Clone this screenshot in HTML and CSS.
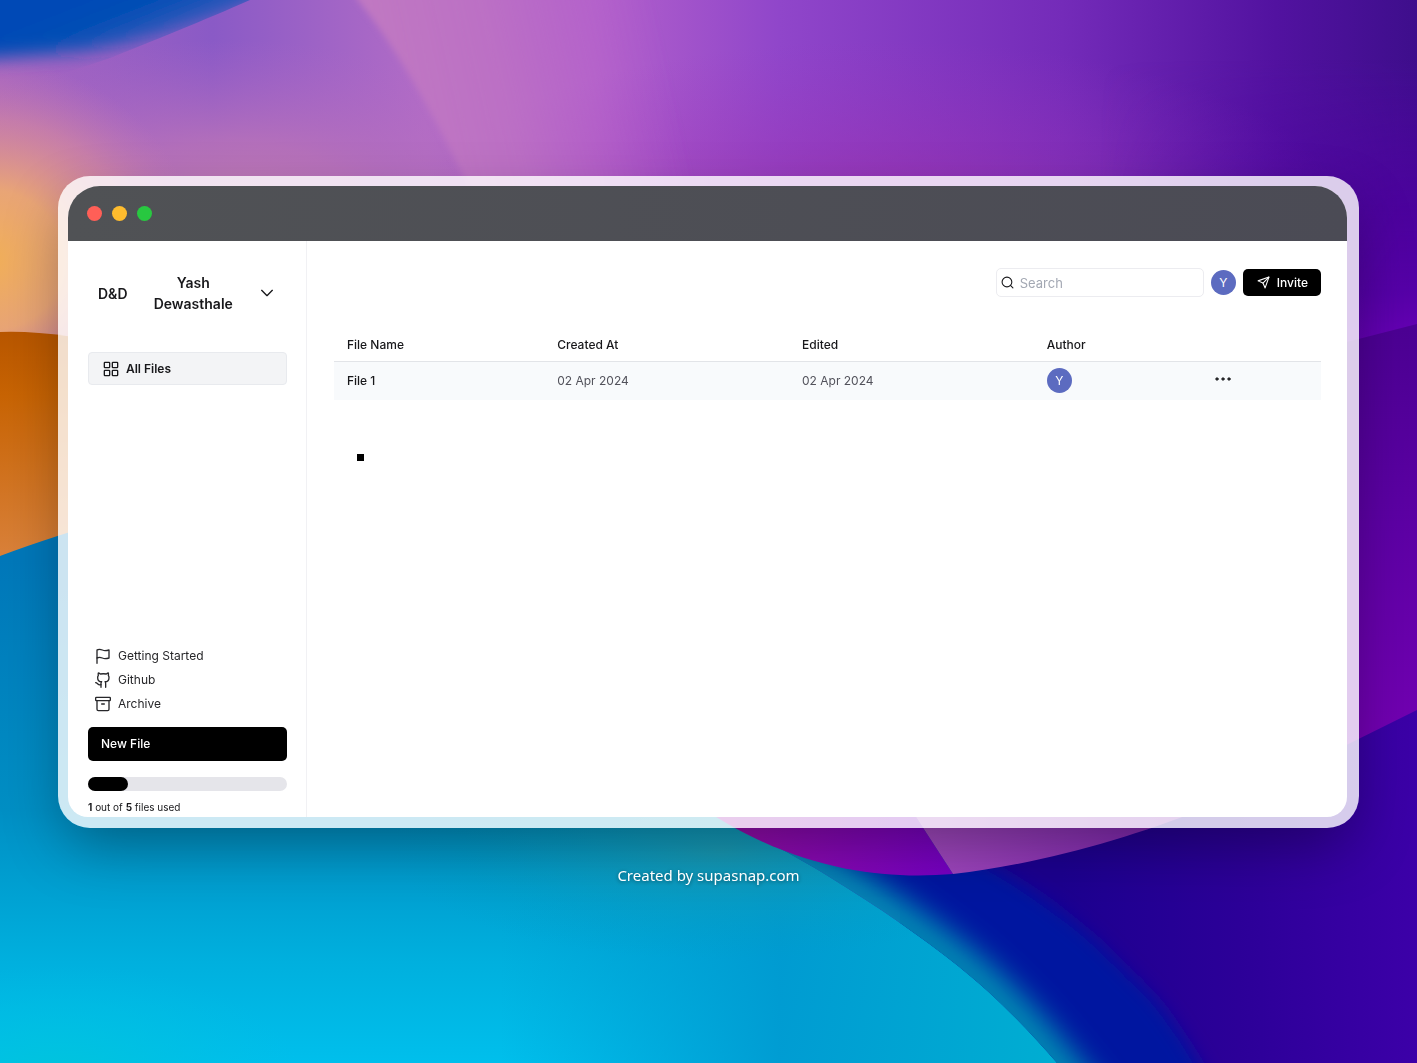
FILE: index.html
```html
<!DOCTYPE html>
<html lang="en">
<head>
<meta charset="utf-8">
<meta name="viewport" content="width=device-width, initial-scale=1">
<title>All Files</title>
<link rel="stylesheet" href="styles.css">
</head>
<body>
<svg class="wallpaper" viewBox="0 0 1417 1063" preserveAspectRatio="none" aria-hidden="true">
  <defs>
    <linearGradient id="sky" x1="0" y1="0" x2="1" y2="0">
      <stop offset="0" stop-color="#a866c0"/>
      <stop offset=".15" stop-color="#8a5ac6"/>
      <stop offset=".3" stop-color="#b26cc6"/>
      <stop offset=".42" stop-color="#b260cb"/>
      <stop offset=".55" stop-color="#9046ca"/>
      <stop offset=".75" stop-color="#742bb9"/>
      <stop offset=".9" stop-color="#5212a0"/>
      <stop offset="1" stop-color="#3e0e8c"/>
    </linearGradient>
    <linearGradient id="ray" gradientUnits="userSpaceOnUse" x1="370" y1="0" x2="640" y2="-60">
      <stop offset="0" stop-color="#c078c2"/>
      <stop offset=".4" stop-color="#be72c4" stop-opacity=".8"/>
      <stop offset="1" stop-color="#b862cc" stop-opacity="0"/>
    </linearGradient>
    <linearGradient id="blue" gradientUnits="userSpaceOnUse" x1="60" y1="0" x2="88" y2="72">
      <stop offset="0" stop-color="#0048b6"/>
      <stop offset=".5" stop-color="#064fb5"/>
      <stop offset="1" stop-color="#3c5cbc"/>
    </linearGradient>
    <linearGradient id="amber" gradientUnits="userSpaceOnUse" x1="0" y1="330" x2="0" y2="550">
      <stop offset="0" stop-color="#b85600"/>
      <stop offset=".3" stop-color="#c86404"/>
      <stop offset="1" stop-color="#d98038"/>
    </linearGradient>
    <linearGradient id="violet" gradientUnits="userSpaceOnUse" x1="0" y1="330" x2="0" y2="740">
      <stop offset="0" stop-color="#4c0094"/>
      <stop offset=".5" stop-color="#5e00a6"/>
      <stop offset="1" stop-color="#7200b2"/>
    </linearGradient>
    <linearGradient id="sea" gradientUnits="userSpaceOnUse" x1="0" y1="560" x2="0" y2="1063">
      <stop offset="0" stop-color="#0078ba"/>
      <stop offset=".5" stop-color="#008fc4"/>
      <stop offset=".8" stop-color="#00b0de"/>
      <stop offset="1" stop-color="#00bfec"/>
    </linearGradient>
    <linearGradient id="seaSide" gradientUnits="userSpaceOnUse" x1="500" y1="0" x2="1060" y2="0">
      <stop offset="0" stop-color="#009cd2" stop-opacity="0"/>
      <stop offset=".5" stop-color="#0099d0" stop-opacity=".9"/>
      <stop offset="1" stop-color="#00aed2"/>
    </linearGradient>
    <linearGradient id="indigo" gradientUnits="userSpaceOnUse" x1="1060" y1="0" x2="1417" y2="0">
      <stop offset="0" stop-color="#1c0090"/>
      <stop offset=".5" stop-color="#2c0098"/>
      <stop offset="1" stop-color="#3c00a8"/>
    </linearGradient>
    <linearGradient id="petal" gradientUnits="userSpaceOnUse" x1="720" y1="0" x2="960" y2="0">
      <stop offset="0" stop-color="#960ea8"/>
      <stop offset="1" stop-color="#7400c4"/>
    </linearGradient>
    <linearGradient id="petalLight" gradientUnits="userSpaceOnUse" x1="930" y1="0" x2="1180" y2="0">
      <stop offset="0" stop-color="#a048be"/>
      <stop offset="1" stop-color="#7e24b0"/>
    </linearGradient>
    <radialGradient id="peach" gradientUnits="userSpaceOnUse" cx="0" cy="0" r="1" gradientTransform="translate(-10 260) scale(210 200)">
      <stop offset="0" stop-color="#f2b058"/>
      <stop offset=".35" stop-color="#eca872" stop-opacity=".95"/>
      <stop offset=".7" stop-color="#dc8e98" stop-opacity=".55"/>
      <stop offset="1" stop-color="#c87cb0" stop-opacity="0"/>
    </radialGradient>
    <radialGradient id="rose" gradientUnits="userSpaceOnUse" cx="0" cy="0" r="1" gradientTransform="translate(230 210) scale(330 170)">
      <stop offset="0" stop-color="#c27cb2"/>
      <stop offset=".4" stop-color="#bc74b8" stop-opacity=".8"/>
      <stop offset="1" stop-color="#b068c4" stop-opacity="0"/>
    </radialGradient>
    <radialGradient id="magenta" gradientUnits="userSpaceOnUse" cx="0" cy="0" r="1" gradientTransform="translate(880 210) scale(460 170)">
      <stop offset="0" stop-color="#a030ac" stop-opacity=".7"/>
      <stop offset="1" stop-color="#9a38c0" stop-opacity="0"/>
    </radialGradient>
    <radialGradient id="mint" gradientUnits="userSpaceOnUse" cx="0" cy="0" r="1" gradientTransform="translate(60 1075) scale(240 110)">
      <stop offset="0" stop-color="#00c4dc"/>
      <stop offset="1" stop-color="#00c0e4" stop-opacity="0"/>
    </radialGradient>
    <radialGradient id="teal" gradientUnits="userSpaceOnUse" cx="0" cy="0" r="1" gradientTransform="translate(720 850) scale(330 110)">
      <stop offset="0" stop-color="#1e9aae" stop-opacity=".8"/>
      <stop offset="1" stop-color="#009cc0" stop-opacity="0"/>
    </radialGradient>
    <linearGradient id="edge" gradientUnits="userSpaceOnUse" x1="0" y1="60" x2="0" y2="350">
      <stop offset="0" stop-color="#5400a8" stop-opacity="0"/>
      <stop offset=".5" stop-color="#4e00a0" stop-opacity=".8"/>
      <stop offset=".8" stop-color="#5600a8"/>
      <stop offset="1" stop-color="#6a00b8"/>
    </linearGradient>
    <linearGradient id="edgeFade" gradientUnits="userSpaceOnUse" x1="1100" y1="0" x2="1400" y2="0">
      <stop offset="0" stop-color="#000"/>
      <stop offset="1" stop-color="#fff"/>
    </linearGradient>
    <mask id="edgeMask"><rect x="1100" width="317" height="380" fill="url(#edgeFade)"/></mask>
    <filter id="soft" x="-30%" y="-30%" width="160%" height="160%"><feGaussianBlur stdDeviation="14"/></filter>
    <filter id="softer" x="-30%" y="-30%" width="160%" height="160%"><feGaussianBlur stdDeviation="9"/></filter>
    <filter id="faint" x="-10%" y="-10%" width="120%" height="120%"><feGaussianBlur stdDeviation="3"/></filter>
    <clipPath id="belowWave"><path d="M720 812C745 832 790 852 831 878C880 908 920 936 958 966C1000 1000 1030 1032 1057 1063H1417V700L1040 760Z"/></clipPath>
    <clipPath id="aboveWedge"><path d="M0 0H250C205 20 150 42 110 58C70 72 40 78 0 100Z"/></clipPath>
  </defs>
  <rect width="1417" height="1063" fill="url(#sky)"/>
  <rect width="1417" height="400" fill="url(#magenta)"/>
  <rect width="600" height="400" fill="url(#rose)"/>
  <path d="M348 -20L358 0C390 40 425 95 475 200V240H700V-20Z" fill="url(#ray)" filter="url(#faint)"/>
  <rect x="1100" width="317" height="380" fill="url(#edge)" mask="url(#edgeMask)"/>
  <rect width="260" height="400" fill="url(#peach)"/>
  <g clip-path="url(#aboveWedge)">
    <path d="M-60 -60H330L262 0C200 24 140 44 80 52L-60 62Z" fill="url(#blue)" filter="url(#softer)"/>
  </g>
  <path d="M0 332Q60 330 130 350V560H0Z" fill="url(#amber)"/>
  <path d="M1300 354L1417 324V760H1300Z" fill="url(#violet)"/>
  <path d="M1300 768L1417 710V1063H900V768Z" fill="url(#indigo)"/>
  <path d="M0 556Q50 537 130 514H700V796L720 812C745 832 790 852 831 878C880 908 920 936 958 966C1000 1000 1030 1032 1057 1063H0Z" fill="url(#sea)"/>
  <path d="M500 780H700L720 812C745 832 790 852 831 878C880 908 920 936 958 966C1000 1000 1030 1032 1057 1063H500Z" fill="url(#seaSide)"/>
  <rect y="940" width="320" height="123" fill="url(#mint)"/>
  <path d="M380 740H700V796L720 812C745 832 790 852 831 878C880 908 920 936 958 966H380Z" fill="url(#teal)"/>
  <g clip-path="url(#belowWave)">
    <path d="M700 700L720 812C745 832 790 852 831 878C880 908 920 936 958 966C1000 1000 1030 1032 1110 1140H1240C1190 1040 1160 1000 1130 975C1090 930 1030 885 960 850Z" fill="#0014a0" filter="url(#softer)"/>
    <path d="M720 812C745 832 790 852 831 878C880 908 920 936 958 966C1000 1000 1030 1032 1100 1120" fill="none" stroke="#0088b4" stroke-width="44" filter="url(#soft)"/>
  </g>
  <path d="M690 800C790 870 880 880 953 874L905 800Z" fill="url(#petal)"/>
  <path d="M905 800L953 874C1040 864 1130 838 1200 810V790Z" fill="url(#petalLight)"/>
</svg>

<main class="stage">
  <section class="frame">
    <div class="window">
      <div class="titlebar">
        <span class="light light-close"></span>
        <span class="light light-min"></span>
        <span class="light light-max"></span>
      </div>
      <div class="app">
        <aside class="sidebar">
          <button class="team" type="button">
            <span>D&amp;D</span>
            <span class="team-name">Yash Dewasthale</span>
            <svg class="icon" viewBox="0 0 24 24"><path d="m4 8 8 8 8-8"/></svg>
          </button>
          <button class="all-files" type="button">
            <svg class="icon" viewBox="0 0 24 24"><rect x="2" y="2" width="8" height="8" rx="1"/><rect x="14" y="2" width="8" height="8" rx="1"/><rect x="14" y="14" width="8" height="8" rx="1"/><rect x="2" y="14" width="8" height="8" rx="1"/></svg>
            All Files
          </button>
          <div class="sidebar-foot">
            <nav class="links">
              <a href="#start"><svg class="icon" viewBox="0 0 24 24"><path d="M3 15s1-1 4-1 5 2 8 2 6-1 6-1V3s-3 1-6 1-5-2-8-2-4 1-4 1z"/><path d="M3 23v-8"/></svg>Getting Started</a>
              <a href="#github"><svg class="icon" viewBox="0 0 24 24"><path d="M16 23v-5a4.800 4.800 0 0 0-1-3.500c3 0 6-2 6-6 .08-1.250-.27-2.480-1-3.500.28-1.150.28-2.350 0-3.500 0 0-1 0-3 1.500-2.640-.5-6.360-.5-9 0C6 1.500 5 1.500 5 1.500c-.3 1.150-.3 2.350 0 3.500a5.400 5.400 0 0 0-1 3.500c0 4 3 6 6 6-.39.490-.68 1.050-.85 1.650-.17.600-.22 1.230-.15 1.850v5"/><path d="M9 19c-4.510 2-5-3-8-3"/></svg>Github</a>
              <a href="#archive"><svg class="icon" viewBox="0 0 24 24"><rect x="1" y="2" width="22" height="5" rx="1"/><path d="M3 7v13a2 2 0 0 0 2 2h14a2 2 0 0 0 2-2V7"/><path d="M10 12h4"/></svg>Archive</a>
            </nav>
            <button class="new-file" type="button">New File</button>
            <div class="meter"><div class="meter-fill" style="width: 20%"></div></div>
            <p class="usage"><b>1</b> out of <b>5</b> files used</p>
          </div>
        </aside>
        <div class="content">
          <header class="toolbar">
            <label class="search">
              <svg class="icon" viewBox="0 0 24 24"><circle cx="11" cy="11" r="9"/><path d="m22 22-4.500-4.500"/></svg>
              <input type="search" placeholder="Search" aria-label="Search">
            </label>
            <span class="avatar">Y</span>
            <button class="invite" type="button">
              <svg class="icon" viewBox="0 0 24 24"><path d="m22 2-7 20-4-9-9-4Z"/><path d="M22 2 11 13"/></svg>
              Invite
            </button>
          </header>
          <table class="files">
            <colgroup><col class="col-name"><col class="col-date"><col class="col-date"><col class="col-author"><col></colgroup>
            <thead>
              <tr><th>File Name</th><th>Created At</th><th>Edited</th><th>Author</th><th></th></tr>
            </thead>
            <tbody>
              <tr>
                <td class="file-name">File 1</td>
                <td>02 Apr 2024</td>
                <td>02 Apr 2024</td>
                <td><span class="avatar">Y</span></td>
                <td><button class="more" type="button" aria-label="More"><svg class="icon" viewBox="0 0 24 24"><circle cx="3" cy="12" r="2"/><circle cx="12" cy="12" r="2"/><circle cx="21" cy="12" r="2"/></svg></button></td>
              </tr>
            </tbody>
          </table>
          <div class="marker"></div>
        </div>
      </div>
    </div>
  </section>
  <p class="credit">Created by supasnap.com</p>
</main>
</body>
</html>
```
FILE: styles.css
```css
* {
  box-sizing: border-box;
}

body {
  margin: 0;
  min-height: 100vh;
  background: #0090c8;
  font: 12px/18px Inter, "Liberation Sans", sans-serif;
  color: #18181b;
}

button,
input {
  font: inherit;
  color: inherit;
}

button {
  border: 0;
  padding: 0;
  background: none;
}

.wallpaper {
  position: fixed;
  inset: 0;
  z-index: -1;
  width: 100%;
  height: 100%;
}

.icon {
  flex: none;
  width: 16px;
  height: 16px;
  fill: none;
  stroke: currentColor;
  stroke-width: 2;
  stroke-linecap: round;
  stroke-linejoin: round;
}

.stage {
  padding: 176px 58px 0;
}

.frame {
  padding: 10px 12px 11px 10px;
  border-radius: 32px;
  background: rgba(255, 255, 255, 0.8);
  box-shadow: 0 24px 60px -8px rgba(0, 0, 0, 0.35);
}

.window {
  overflow: hidden;
  border-radius: 32px 32px 20px 20px;
  background: #fff;
}

.titlebar {
  display: flex;
  align-items: center;
  gap: 10px;
  height: 55px;
  padding: 0 19px;
  background: linear-gradient(90deg, #505255, #4b4b55);
}

.light {
  width: 15px;
  height: 15px;
  border-radius: 50%;
}

.light-close {
  background: #ff5f57;
}

.light-min {
  background: #febc2e;
}

.light-max {
  background: #28c840;
}

.app {
  display: flex;
  min-height: 576px;
}

.sidebar {
  display: flex;
  flex-direction: column;
  flex: none;
  width: 239px;
  padding: 20px 19px 1px 20px;
  border-right: 1px solid #f1f1f4;
}

.team {
  display: flex;
  align-items: center;
  gap: 20px;
  padding: 11px 12px 11px 10px;
  font-size: 14px;
  line-height: 21px;
  font-weight: 600;
}

.team-name {
  flex: 1;
  text-align: center;
}

.all-files {
  display: flex;
  align-items: center;
  gap: 7px;
  height: 33px;
  margin-top: 27px;
  padding: 0 14px;
  border: 1px solid #e8eaee;
  border-radius: 4px;
  background: #f3f4f6;
  font-weight: 600;
}

.sidebar-foot {
  display: flex;
  flex-direction: column;
  margin-top: auto;
}

.links {
  display: flex;
  flex-direction: column;
  gap: 6px;
  padding: 0 7px;
}

.links a {
  display: flex;
  align-items: center;
  gap: 7px;
  color: #27272a;
  text-decoration: none;
}

.new-file {
  height: 34px;
  margin-top: 14px;
  padding: 0 13px;
  border-radius: 5px;
  background: #000;
  color: #fff;
  font-weight: 500;
  text-align: left;
}

.meter {
  height: 14px;
  margin-top: 16px;
  border-radius: 7px;
  background: #e5e5ea;
}

.meter-fill {
  height: 100%;
  border-radius: 7px;
  background: #000;
}

.usage {
  margin: 7px 0 0;
  font-size: 10px;
}

.content {
  flex: 1;
  padding: 27px 26px 27px 27px;
}

.toolbar {
  display: flex;
  align-items: center;
  justify-content: flex-end;
  gap: 7px;
}

.search {
  display: flex;
  align-items: center;
  gap: 6px;
  width: 208px;
  height: 29px;
  padding: 0 4px;
  border: 1px solid #ececf0;
  border-radius: 5px;
}

.search .icon {
  width: 13px;
  height: 13px;
}

.search input {
  flex: 1;
  min-width: 0;
  padding: 0;
  border: 0;
  outline: 0;
  background: none;
  font-size: 13px;
}

.search input::placeholder {
  color: #a3a8b3;
}

.avatar {
  display: grid;
  place-items: center;
  width: 25px;
  height: 25px;
  border-radius: 50%;
  background: #5c6bc0;
  color: #fff;
}

.invite {
  display: flex;
  align-items: center;
  gap: 7px;
  height: 27px;
  padding: 0 13px 0 14px;
  border-radius: 5px;
  background: #000;
  color: #fff;
  font-weight: 500;
}

.invite .icon {
  width: 13px;
  height: 13px;
}

.files {
  width: 100%;
  margin-top: 32px;
  border-collapse: collapse;
  table-layout: fixed;
  text-align: left;
}

.col-name {
  width: 21.3%;
}

.col-date {
  width: 24.8%;
}

.col-author {
  width: 17%;
}

.files th,
.files td {
  height: 32px;
  padding: 0 13px;
  font-weight: 500;
}

.files thead tr {
  border-bottom: 1px solid #e2e4e8;
}

.files td {
  height: 39px;
  background: #f8fafc;
  color: #52525b;
  font-weight: 400;
}

.files .file-name {
  color: #18181b;
  font-weight: 500;
}

.more {
  display: block;
  padding-bottom: 4px;
}

.more .icon {
  display: block;
  fill: #27272a;
  stroke: #27272a;
  stroke-width: 1;
}

.marker {
  width: 7px;
  height: 7px;
  margin: 54px 23px 0;
  background: #000;
}

.credit {
  margin: 36px 0 0;
  font: 15px/22px "Noto Sans", "Open Sans", sans-serif;
  color: #fff;
  text-align: center;
  text-shadow: 0 1px 4px rgba(0, 0, 0, 0.5);
}
```
